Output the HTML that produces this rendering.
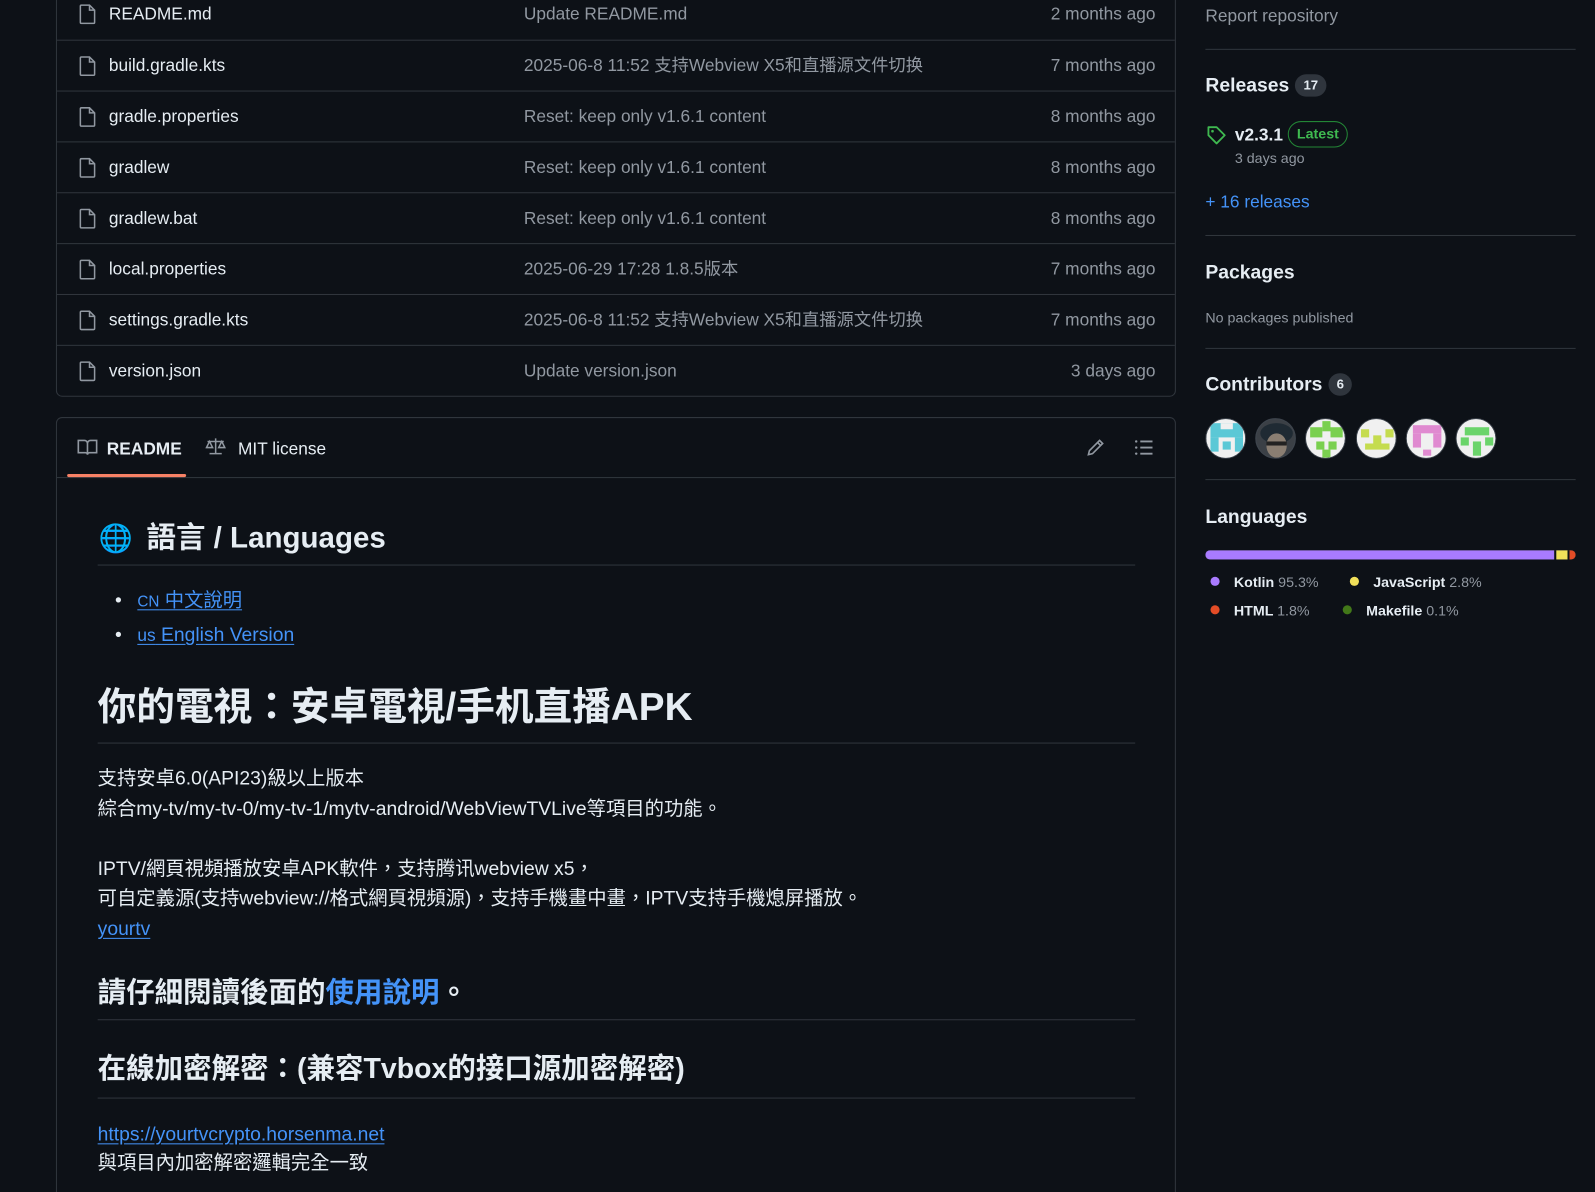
<!DOCTYPE html>
<html><head><meta charset="utf-8"><style>
*{margin:0;padding:0;box-sizing:border-box}
html,body{width:1595px;height:1192px;overflow:hidden}
body{background:#0d1117;color:#e6edf3;font-family:"Liberation Sans","Noto Sans CJK TC",sans-serif;position:relative;line-height:1.25}
#w{position:absolute;left:0;top:0;width:1568px;height:1172px;transform:scale(1.0172);transform-origin:0 0}
.a{position:absolute;white-space:nowrap}
.files{position:absolute;left:55px;top:-12px;width:1101px;height:402px;border:1px solid #30363d;border-radius:6px}
.row{position:absolute;left:0;width:1099px;height:50px;border-top:1px solid #30363d;font-size:17px;line-height:22px}
.row:first-child{border-top:none}
.row .n{position:absolute;left:51px;top:14px;color:#e6edf3}
.row .m{position:absolute;left:459px;top:14px;color:#9198a1}
.row .t{position:absolute;right:19px;top:14px;color:#9198a1}
.row svg{position:absolute;left:22px;top:15px}
.readme{position:absolute;left:55px;top:410px;width:1101px;height:820px;border:1px solid #30363d;border-radius:6px}
.hdr{position:absolute;left:0;top:0;width:1099px;height:59px;border-bottom:1px solid #30363d}
a,.lk{color:#4493f8;text-decoration:underline;text-underline-offset:3px}
.hr{position:absolute;left:40px;width:1020px;height:1px;background:#30363d}
.c{font-size:19px;line-height:24px}
.sh{font-size:19px;font-weight:bold}
.cnt{display:inline-block;background:#2f353d;border-radius:12px;font-size:13px;font-weight:bold;padding:3px 8px;margin-left:6px;vertical-align:2px}
.sl{position:absolute;left:1185px;width:364px;height:1px;background:#30363d}
.dot{display:inline-block;width:9px;height:9px;border-radius:50%;margin-right:14px;vertical-align:1px}
.lg{font-size:14px;font-weight:bold}
.lg span.p{font-weight:normal;color:#9198a1}
.av{position:absolute;top:411px;width:40px;height:40px;border-radius:50%;overflow:hidden;border:1px solid #3d444d;background:#f0f0f0}
</style></head><body><div id="w">

<div class="files">
<div class="row" style="top:0"><svg width="16" height="20" viewBox="0 0 16 20"><path d="M2 1h8l5 5v12a1 1 0 0 1-1 1H2a1 1 0 0 1-1-1V2a1 1 0 0 1 1-1z M10 1v5h5" fill="none" stroke="#9198a1" stroke-width="1.5"/></svg><span class="n">README.md</span><span class="m">Update README.md</span><span class="t">2 months ago</span></div>
<div class="row" style="top:50px"><svg width="16" height="20" viewBox="0 0 16 20"><path d="M2 1h8l5 5v12a1 1 0 0 1-1 1H2a1 1 0 0 1-1-1V2a1 1 0 0 1 1-1z M10 1v5h5" fill="none" stroke="#9198a1" stroke-width="1.5"/></svg><span class="n">build.gradle.kts</span><span class="m">2025-06-8 11:52 支持Webview X5和直播源文件切换</span><span class="t">7 months ago</span></div>
<div class="row" style="top:100px"><svg width="16" height="20" viewBox="0 0 16 20"><path d="M2 1h8l5 5v12a1 1 0 0 1-1 1H2a1 1 0 0 1-1-1V2a1 1 0 0 1 1-1z M10 1v5h5" fill="none" stroke="#9198a1" stroke-width="1.5"/></svg><span class="n">gradle.properties</span><span class="m">Reset: keep only v1.6.1 content</span><span class="t">8 months ago</span></div>
<div class="row" style="top:150px"><svg width="16" height="20" viewBox="0 0 16 20"><path d="M2 1h8l5 5v12a1 1 0 0 1-1 1H2a1 1 0 0 1-1-1V2a1 1 0 0 1 1-1z M10 1v5h5" fill="none" stroke="#9198a1" stroke-width="1.5"/></svg><span class="n">gradlew</span><span class="m">Reset: keep only v1.6.1 content</span><span class="t">8 months ago</span></div>
<div class="row" style="top:200px"><svg width="16" height="20" viewBox="0 0 16 20"><path d="M2 1h8l5 5v12a1 1 0 0 1-1 1H2a1 1 0 0 1-1-1V2a1 1 0 0 1 1-1z M10 1v5h5" fill="none" stroke="#9198a1" stroke-width="1.5"/></svg><span class="n">gradlew.bat</span><span class="m">Reset: keep only v1.6.1 content</span><span class="t">8 months ago</span></div>
<div class="row" style="top:250px"><svg width="16" height="20" viewBox="0 0 16 20"><path d="M2 1h8l5 5v12a1 1 0 0 1-1 1H2a1 1 0 0 1-1-1V2a1 1 0 0 1 1-1z M10 1v5h5" fill="none" stroke="#9198a1" stroke-width="1.5"/></svg><span class="n">local.properties</span><span class="m">2025-06-29 17:28 1.8.5版本</span><span class="t">7 months ago</span></div>
<div class="row" style="top:300px"><svg width="16" height="20" viewBox="0 0 16 20"><path d="M2 1h8l5 5v12a1 1 0 0 1-1 1H2a1 1 0 0 1-1-1V2a1 1 0 0 1 1-1z M10 1v5h5" fill="none" stroke="#9198a1" stroke-width="1.5"/></svg><span class="n">settings.gradle.kts</span><span class="m">2025-06-8 11:52 支持Webview X5和直播源文件切换</span><span class="t">7 months ago</span></div>
<div class="row" style="top:350px"><svg width="16" height="20" viewBox="0 0 16 20"><path d="M2 1h8l5 5v12a1 1 0 0 1-1 1H2a1 1 0 0 1-1-1V2a1 1 0 0 1 1-1z M10 1v5h5" fill="none" stroke="#9198a1" stroke-width="1.5"/></svg><span class="n">version.json</span><span class="m">Update version.json</span><span class="t">3 days ago</span></div>
</div>

<div class="readme">
<div class="hdr">
<svg class="a" style="left:20px;top:20px" width="20" height="18" viewBox="0 0 20 18"><path d="M1 2h6a3 3 0 0 1 3 3v11a2 2 0 0 0-2-2H1z M19 2h-6a3 3 0 0 0-3 3v11a2 2 0 0 1 2-2h7z" fill="none" stroke="#9198a1" stroke-width="1.6"/></svg>
<span class="a" style="left:49px;top:20px;font-size:17px;font-weight:bold">README</span>
<div class="a" style="left:10px;top:55px;width:117px;height:3px;background:#f78166;border-radius:2px"></div>
<svg class="a" style="left:146px;top:19px" width="20" height="18" viewBox="0 0 20 18"><path d="M10 1v15M4 16h12M2 4h16M4 4l-3 6h6zM16 4l-3 6h6z" fill="none" stroke="#9198a1" stroke-width="1.5"/></svg>
<span class="a" style="left:178px;top:20px;font-size:17px">MIT license</span>
<svg class="a" style="left:1011px;top:19px" width="20" height="20" viewBox="0 0 20 20"><path d="M3 17l1-4L14 3l3 3L7 16z M12 5l3 3" fill="none" stroke="#9198a1" stroke-width="1.6"/></svg>
<svg class="a" style="left:1059px;top:20px" width="20" height="18" viewBox="0 0 20 18"><path d="M6 3h12M6 9h12M6 15h12" stroke="#9198a1" stroke-width="1.8"/><circle cx="2" cy="3" r="1.2" fill="#9198a1"/><circle cx="2" cy="9" r="1.2" fill="#9198a1"/><circle cx="2" cy="15" r="1.2" fill="#9198a1"/></svg>
</div>
<span class="a" style="left:41px;top:102px;font-size:27px;line-height:32px">🌐</span>
<span class="a" style="left:88px;top:100px;font-size:29px;line-height:36px;font-weight:bold">語言 / Languages</span>
<div class="hr" style="top:144px"></div>
<span class="a c" style="left:57px;top:168px">•</span><span class="a c lk" style="left:79px;top:168px"><span style="font-size:15px">CN</span> 中文說明</span>
<span class="a c" style="left:57px;top:202px">•</span><span class="a c lk" style="left:79px;top:202px"><span style="font-size:17px">us</span> English Version</span>
<span class="a" style="left:40px;top:262px;font-size:38px;line-height:46px;font-weight:bold">你的電視：安卓電視/手机直播APK</span>
<div class="hr" style="top:319px"></div>
<span class="a c" style="left:40px;top:343px">支持安卓6.0(API23)級以上版本</span>
<span class="a c" style="left:40px;top:373px">綜合my-tv/my-tv-0/my-tv-1/mytv-android/WebViewTVLive等項目的功能。</span>
<span class="a c" style="left:40px;top:432px">IPTV/網頁視頻播放安卓APK軟件，支持腾讯webview x5，</span>
<span class="a c" style="left:40px;top:461px">可自定義源(支持webview://格式網頁視頻源)，支持手機畫中畫，IPTV支持手機熄屏播放。</span>
<span class="a c lk" style="left:40px;top:491px">yourtv</span>
<span class="a" style="left:40px;top:548px;font-size:28px;line-height:34px;font-weight:bold">請仔細閱讀後面的<span style="color:#4493f8">使用說明</span>。</span>
<div class="hr" style="top:591px"></div>
<span class="a" style="left:40px;top:623px;font-size:28px;line-height:34px;font-weight:bold">在線加密解密：(兼容Tvbox的接口源加密解密)</span>
<div class="hr" style="top:668px"></div>
<span class="a c lk" style="left:40px;top:693px">https://yourtvcrypto.horsenma.net</span>
<span class="a c" style="left:40px;top:721px">與項目內加密解密邏輯完全一致</span>
</div>

<div class="side">
<span class="a" style="left:1185px;top:5px;font-size:17px;color:#9198a1">Report repository</span>
<div class="sl" style="top:48px"></div>
<span class="a sh" style="left:1185px;top:73px">Releases<span class="cnt">17</span></span>
<svg class="a" style="left:1186px;top:123px" width="20" height="20" viewBox="0 0 20 20"><path d="M2 2h8l8 8-8 8-8-8z" fill="none" stroke="#3fb950" stroke-width="1.8" stroke-linejoin="round"/><circle cx="6" cy="6" r="1.3" fill="#3fb950"/></svg>
<span class="a" style="left:1214px;top:122px;font-size:17px;font-weight:bold">v2.3.1</span>
<span class="a" style="left:1266px;top:119px;border:1px solid #238636;color:#3fb950;border-radius:13px;font-size:14px;font-weight:bold;padding:3px 8px">Latest</span>
<span class="a" style="left:1214px;top:147px;font-size:14px;color:#9198a1">3 days ago</span>
<span class="a" style="left:1185px;top:188px;font-size:17px;color:#4493f8">+ 16 releases</span>
<div class="sl" style="top:231px"></div>
<span class="a sh" style="left:1185px;top:257px">Packages</span>
<span class="a" style="left:1185px;top:304px;font-size:14px;color:#9198a1">No packages published</span>
<div class="sl" style="top:342px"></div>
<span class="a sh" style="left:1185px;top:367px">Contributors<span class="cnt">6</span></span>
<div class="av" style="left:1185px"><svg width="40" height="40"><rect width="40" height="40" fill="#f0f0f0"/><rect x="4" y="4" width="32" height="14" fill="#5bc8d6"/><rect x="14" y="4" width="12" height="6" fill="#f0f0f0"/><rect x="4" y="18" width="8" height="14" fill="#5bc8d6"/><rect x="28" y="18" width="8" height="14" fill="#5bc8d6"/><rect x="16" y="22" width="8" height="8" fill="#5bc8d6"/></svg></div>
<div class="av" style="left:1234px;background:#4a4f55"><svg width="40" height="40"><rect width="40" height="40" fill="#3b4046"/><ellipse cx="20" cy="14" rx="16" ry="10" fill="#1f2a33"/><ellipse cx="20" cy="26" rx="10" ry="12" fill="#8a7e72"/><rect x="10" y="22" width="20" height="4" fill="#222"/></svg></div>
<div class="av" style="left:1283px"><svg width="40" height="40"><rect width="40" height="40" fill="#f0f0f0"/><rect x="4" y="8" width="12" height="10" fill="#7ad04f"/><rect x="24" y="8" width="12" height="10" fill="#7ad04f"/><rect x="16" y="2" width="8" height="10" fill="#7ad04f"/><rect x="10" y="22" width="8" height="8" fill="#7ad04f"/><rect x="22" y="22" width="8" height="8" fill="#7ad04f"/><rect x="16" y="30" width="8" height="8" fill="#7ad04f"/></svg></div>
<div class="av" style="left:1333px"><svg width="40" height="40"><rect width="40" height="40" fill="#f0f0f0"/><rect x="4" y="10" width="8" height="8" fill="#c5dc4f"/><rect x="28" y="10" width="8" height="8" fill="#c5dc4f"/><rect x="16" y="16" width="8" height="8" fill="#c5dc4f"/><rect x="8" y="24" width="24" height="6" fill="#c5dc4f"/></svg></div>
<div class="av" style="left:1382px"><svg width="40" height="40"><rect width="40" height="40" fill="#f0f0f0"/><rect x="6" y="6" width="28" height="8" fill="#e08ad0"/><rect x="6" y="14" width="8" height="14" fill="#e08ad0"/><rect x="26" y="14" width="8" height="14" fill="#e08ad0"/><rect x="16" y="30" width="8" height="6" fill="#e08ad0"/></svg></div>
<div class="av" style="left:1431px"><svg width="40" height="40"><rect width="40" height="40" fill="#f0f0f0"/><rect x="8" y="8" width="24" height="8" fill="#6bd46b"/><rect x="4" y="18" width="8" height="8" fill="#6bd46b"/><rect x="28" y="18" width="8" height="8" fill="#6bd46b"/><rect x="16" y="22" width="8" height="14" fill="#6bd46b"/></svg></div>
<div class="sl" style="top:471px"></div>
<span class="a sh" style="left:1185px;top:497px">Languages</span>
<div class="a" style="left:1185px;top:541px;width:364px;height:9px;border-radius:5px;overflow:hidden;display:flex;background:#444">
<div style="width:95.3%;background:#a97bff"></div><div style="width:2px;background:#0d1117"></div><div style="width:2.8%;background:#f1e05a"></div><div style="width:2px;background:#0d1117"></div><div style="width:1.8%;background:#e34c26"></div></div>
<span class="a lg" style="left:1190px;top:564px"><span class="dot" style="background:#a97bff"></span>Kotlin <span class="p">95.3%</span></span>
<span class="a lg" style="left:1327px;top:564px"><span class="dot" style="background:#f1e05a"></span>JavaScript <span class="p">2.8%</span></span>
<span class="a lg" style="left:1190px;top:592px"><span class="dot" style="background:#e34c26"></span>HTML <span class="p">1.8%</span></span>
<span class="a lg" style="left:1320px;top:592px"><span class="dot" style="background:#427819"></span>Makefile <span class="p">0.1%</span></span>
</div>
</div></body></html>
